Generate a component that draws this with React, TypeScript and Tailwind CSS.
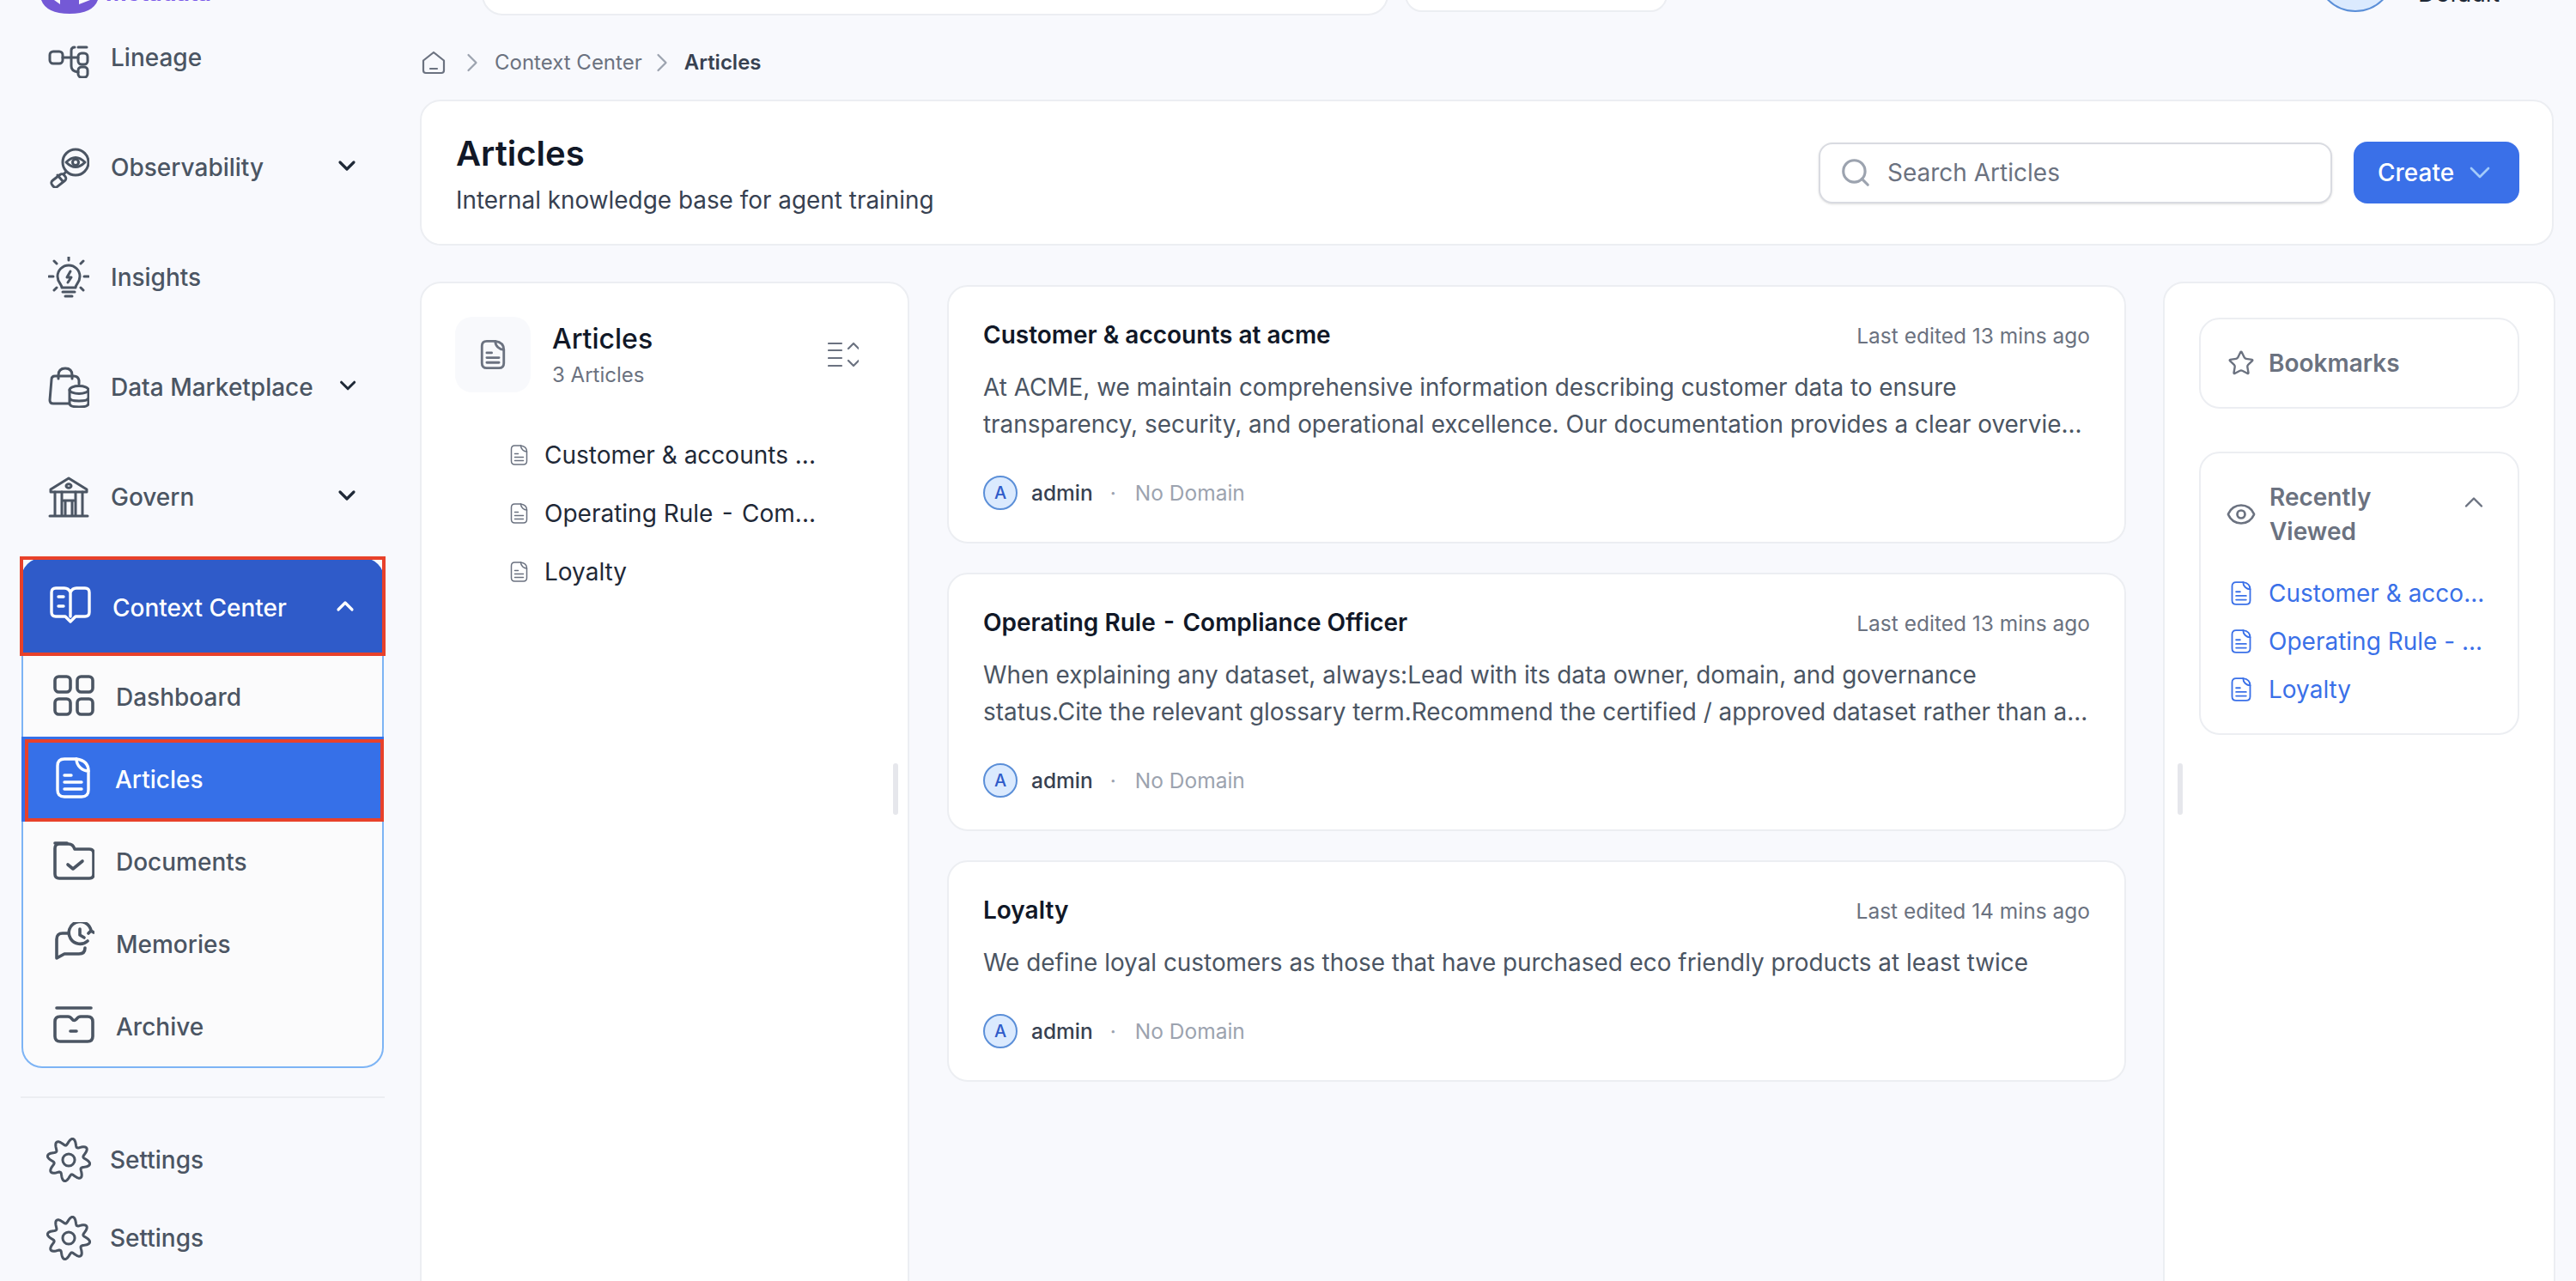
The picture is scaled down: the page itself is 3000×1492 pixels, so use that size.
import { ChevronDown, ChevronRight, ChevronUp, Eye, Search, Star } from "lucide-react";
import type { ReactNode } from "react";

const gearPath = (() => {
  const pts: string[] = [];
  for (let i = 0; i < 160; i++) {
    const a = (i / 160) * Math.PI * 2;
    const r = 19.5 + 3.6 * Math.cos(a * 8 - Math.PI / 2);
    pts.push(`${(24 + r * Math.cos(a)).toFixed(2)} ${(24 + r * Math.sin(a)).toFixed(2)}`);
  }
  return `M${pts.join("L")}Z`;
})();

function Svg({ children, className = "h-12 w-12 shrink-0", box = "0 0 48 48", sw = 3 }: { children: ReactNode; className?: string; box?: string; sw?: number }) {
  return (
    <svg viewBox={box} className={className} fill="none" stroke="currentColor" strokeWidth={sw} strokeLinecap="round" strokeLinejoin="round">
      {children}
    </svg>
  );
}

function LineageIcon() {
  return (
    <Svg>
      <rect x="2" y="17" width="15" height="14" rx="4" />
      <rect x="35" y="19" width="11" height="13" rx="4" />
      <rect x="35" y="35" width="11" height="12" rx="4" />
      <path d="M35 12h10M17 24h18M27 24v-8q0-4 4-4M27 24v10q0 6 8 7" />
    </Svg>
  );
}

function ObservabilityIcon() {
  return (
    <Svg>
      <circle cx="32" cy="18" r="15" />
      <path d="M21 18q11-11 22 0q-11 11-22 0Z" />
      <circle cx="32" cy="18" r="3.5" />
      <path d="M21 29l-3 3" />
      <rect x="3" y="35" width="18" height="9" rx="3.5" transform="rotate(-38 12 39)" />
      <path d="M11 33l6 7" />
    </Svg>
  );
}

function InsightsIcon() {
  return (
    <Svg>
      <path d="M16 36c0-4-5-6-5-13a13 13 0 0 1 26 0c0 7-5 9-5 13Z" />
      <path d="M17 41h14M20 46h8" />
      <path d="M26 17l-4 7h5l-4 6" />
      <path d="M24 0v4M7 5l3 3M41 5l-3 3M1 23h5M42 23h5M10 36l-3 3M38 36l3 3" />
    </Svg>
  );
}

function MarketplaceIcon() {
  return (
    <Svg>
      <path d="M24 43H6q-4 0-4-4L4 15q0-4 4-4h22q5 0 6 5v4" />
      <path d="M12 14v-4q0-8 8-8t8 8v4" />
      <ellipse cx="36" cy="27" rx="11" ry="4.5" />
      <path d="M25 27v16q0 4 11 4t11-4V27M25 36q0 4 11 4t11-4" />
    </Svg>
  );
}

function GovernIcon() {
  return (
    <Svg>
      <path d="M24 2 3 15v3h42v-3Z" />
      <ellipse cx="24" cy="11" rx="3" ry="2.2" />
      <path d="M2 46h44M8 18v28M16 18v28M32 18v28M40 18v28M18 28h12M20 28v18M28 28v18" />
    </Svg>
  );
}

function BookIcon() {
  return (
    <Svg sw={3.4}>
      <path d="M24 8q-2-5-7-5H7Q2 3 2 8v23q0 5 5 5h11l6 6 6-6h11q5 0 5-5V8q0-5-5-5H31q-5 0-7 5v28" />
      <path d="M10 13h6M10 24h6" />
    </Svg>
  );
}

function GridIcon() {
  return (
    <Svg sw={3.6}>
      <rect x="2" y="2" width="18" height="18" rx="4.5" />
      <rect x="28" y="2" width="18" height="18" rx="4.5" />
      <rect x="2" y="28" width="18" height="18" rx="4.5" />
      <rect x="28" y="28" width="18" height="18" rx="4.5" />
    </Svg>
  );
}

function DocIcon({ className = "h-12 w-10 shrink-0", sw = 3.4 }: { className?: string; sw?: number }) {
  return (
    <Svg box="0 0 40 48" className={className} sw={sw}>
      <path d="M24 2H10q-8 0-8 8v28q0 8 8 8h20q8 0 8-8V16C31 16 24 10 24 2Z" />
      <path d="M24 2q14 2 14 14" />
      <path d="M10 21h8M10 29h20M10 37h20" />
    </Svg>
  );
}

function FolderCheckIcon() {
  return (
    <Svg sw={3.6}>
      <path d="M2 40V10q0-5 5-5h11q5 0 7 6h17q5 0 5 5v24q0 5-5 5H7q-5 0-5-5Z" />
      <path d="M2 4h14" />
      <path d="M17 29l6 5 11-9" />
    </Svg>
  );
}

function MemoriesIcon() {
  return (
    <Svg sw={3.6}>
      <path d="M18 13H11q-7 0-7 7v22l9-5h17q7 0 7-7" />
      <path d="M44 10A13 13 0 1 0 40 22" />
      <path d="M31 8v7l5 3" />
      <path d="M47 12l-3-2-3 3" />
    </Svg>
  );
}

function ArchiveIcon() {
  return (
    <Svg sw={3.6}>
      <path d="M4 4h40" />
      <path d="M2 37V20q0-6 6-6h9q3 0 5 3t5 0q2-3 5-3h8q6 0 6 6v17q0 6-6 6H8q-6 0-6-6Z" />
      <path d="M20 31h7" />
    </Svg>
  );
}

function GearIcon() {
  return (
    <svg viewBox="0 0 48 48" className="h-[52px] w-[52px] shrink-0 text-[#4b5563]" fill="none" stroke="currentColor" strokeWidth="2.8" strokeLinejoin="round">
      <path d={gearPath} />
      <circle cx="24" cy="24" r="6.5" />
    </svg>
  );
}

function NavRow({ icon, label, chevron }: { icon: ReactNode; label: string; chevron?: boolean }) {
  return (
    <div className="flex h-16 w-[420px] items-center gap-[25px] pl-14 text-[28px] font-medium text-[#4b5563]">
      {icon}
      <span className="whitespace-nowrap">{label}</span>
      {chevron && <ChevronDown className="-mt-1 ml-auto h-8 w-8 text-[#1f2937]" strokeWidth={2.4} />}
    </div>
  );
}

function SubRow({ icon, label }: { icon: ReactNode; label: string }) {
  return (
    <div className="flex h-24 items-center gap-[25px] pl-[35px] text-[28px] font-medium text-[#4b5563]">
      {icon}
      <span className="mt-[3px]">{label}</span>
    </div>
  );
}

function Sidebar() {
  return (
    <aside className="flex w-[489px] shrink-0 flex-col">
      {/* Logo, cut off by the top of the page */}
      <div className="flex h-4 items-end gap-[9px] overflow-hidden pl-12">
        <svg viewBox="0 0 66 16" className="h-4 w-[66px] shrink-0">
          <path d="M0 0H66Q60 16 33 16T0 0Z" fill="#7459d6" />
          <path d="M15 0h7v5ZM44 0h13L44 5Z" fill="#f8f9fd" />
        </svg>
        <div className="mb-[10px] text-[26.5px] font-bold leading-[30px] text-[#7c5ce8]">Metadata</div>
      </div>
      <div className="mt-[19px] flex flex-col gap-16">
        <NavRow icon={<LineageIcon />} label="Lineage" />
        <NavRow icon={<ObservabilityIcon />} label="Observability" chevron />
        <NavRow icon={<InsightsIcon />} label="Insights" />
        <NavRow icon={<MarketplaceIcon />} label="Data Marketplace" chevron />
        <NavRow icon={<GovernIcon />} label="Govern" chevron />
      </div>
      {/* Context Center group */}
      <div className="ml-[25px] mt-[39px] h-[594px] w-[422px] rounded-[24px] border-2 border-[#7db4f5] bg-[#fbfbfc]">
        <div className="relative -mx-[2px] -mt-[2px] flex h-[112px] items-center gap-[25px] rounded-t-[24px] bg-[#2f5bc9] pl-[33px] pr-[29px] text-[28px] font-medium text-white">
          <BookIcon />
          <span className="mt-[3px]">Context Center</span>
          <ChevronUp className="ml-auto h-8 w-8" strokeWidth={2.4} />
          <div className="absolute -inset-[2px] border-[4px] border-[#e8412a]" />
        </div>
        <SubRow icon={<GridIcon />} label="Dashboard" />
        <div className="relative -mx-[2px] flex h-[99px] items-center gap-[29px] bg-[#3670e8] pb-[3px] pl-[40px] text-[28px] font-medium text-white">
          <DocIcon />
          <span className="mt-[3px]">Articles</span>
          <div className="absolute inset-x-0 bottom-0 top-[3px] ml-[4px] border-[4px] border-[#e8412a]" />
        </div>
        <div className="-mt-[3px]">
          <SubRow icon={<FolderCheckIcon />} label="Documents" />
        </div>
        <SubRow icon={<MemoriesIcon />} label="Memories" />
        <SubRow icon={<ArchiveIcon />} label="Archive" />
      </div>
      <div className="ml-6 mt-[33px] h-[2px] w-[424px] bg-[#eceef2]" />
      <div className="mt-[46px] flex flex-col gap-[39px]">
        {[0, 1].map((i) => (
          <div key={i} className="flex h-[52px] items-center gap-[22px] pl-[54px] text-[28px] font-medium text-[#4b5563]">
            <GearIcon />
            <span>Settings</span>
          </div>
        ))}
      </div>
    </aside>
  );
}

const cards = [
  {
    title: "Customer & accounts at acme",
    time: "Last edited 13 mins ago",
    lines: [
      "At ACME, we maintain comprehensive information describing customer data to ensure",
      "transparency, security, and operational excellence. Our documentation provides a clear overvie...",
    ],
  },
  {
    title: "Operating Rule\u00a0\u200a-\u200a\u00a0Compliance Officer",
    time: "Last edited 13 mins ago",
    lines: [
      "When explaining any dataset, always:Lead with its data owner, domain, and governance",
      "status.Cite the relevant glossary term.Recommend the certified / approved dataset rather than a...",
    ],
  },
  {
    title: "Loyalty",
    time: "Last edited 14 mins ago",
    lines: ["We define loyal customers as those that have purchased eco friendly products at least twice"],
  },
];

function ArticleCard({ title, time, lines }: { title: string; time: string; lines: string[] }) {
  return (
    <div className="rounded-[24px] border-2 border-[#eceef2] bg-white pb-[37px] pl-10 pr-10 pt-[38px]">
      <div className="flex h-9 items-center justify-between">
        <span className="text-[28px] font-semibold text-[#111827]">{title}</span>
        <span className="mt-[2px] text-[24.5px] text-[#6b7280]">{time}</span>
      </div>
      <div className="mt-[22px] text-[27.9px] leading-[43px] text-[#4b5563]">
        {lines.map((l) => (
          <div key={l} className="whitespace-nowrap">{l}</div>
        ))}
      </div>
      <div className="mt-[38px] flex h-10 items-center text-[24.5px]">
        <span className="flex h-10 w-10 items-center justify-center rounded-full border-2 border-[#5b8fd8] bg-[#dbeafe] text-[20px] font-medium text-[#2f5bc9]">A</span>
        <span className="ml-4 font-medium text-[#374151]">admin</span>
        <span className="ml-5 text-[#9ca3af]">·</span>
        <span className="ml-[22px] text-[#9ca3af]">No Domain</span>
      </div>
    </div>
  );
}

function SortIcon() {
  return (
    <Svg box="0 0 36 30" className="h-[30px] w-9" sw={2.2}>
      <path d="M1 2h15M1 10h15M1 19h15M1 28h15" />
      <path d="M24 8l6-6 6 6M24 22l6 6 6-6" />
    </Svg>
  );
}

export default function App() {
  return (
    <div className="flex h-[1492px] w-[3000px] overflow-hidden bg-[#f8f9fd] font-[Inter,sans-serif]">
      <Sidebar />
      <main className="flex w-[2487px] shrink-0 flex-col">
        {/* Top bar, mostly cut off */}
        <div className="relative h-[18px] shrink-0">
          <div className="absolute bottom-0 left-[72px] h-[70px] w-[1056px] rounded-[24px] border-2 border-[#eceef2] bg-white" />
          <div className="absolute bottom-1 left-[1147px] h-[70px] w-[306px] rounded-[20px] border-2 border-[#eceef2] bg-white" />
          <div className="absolute bottom-1 left-[2208px] h-[92px] w-[92px] rounded-full border-2 border-[#5b8fd8] bg-[#dbeafe]" />
          <div className="absolute -top-[28px] left-[2327px] text-[28px] leading-[40px] text-[#1f2937]">Default</div>
        </div>
        {/* Breadcrumb */}
        <div className="flex h-[98px] shrink-0 items-center pt-[12px] text-[24px] text-[#6b7280]">
          <Svg box="0 0 28 28" className="ml-[2px] h-7 w-7" sw={2.2}>
            <path d="M2 11.5 14 2l12 9.5V23q0 3-3 3H5q-3 0-3-3Z" />
            <path d="M10 21h8" />
          </Svg>
          <ChevronRight className="ml-[13px] h-9 w-9 text-[#9ca3af]" strokeWidth={1.5} />
          <span className="ml-2">Context Center</span>
          <ChevronRight className="ml-[5px] h-9 w-9 text-[#9ca3af]" strokeWidth={1.5} />
          <span className="ml-2 font-semibold text-[#374151]">Articles</span>
        </div>
        {/* Page header */}
        <div className="flex h-[170px] w-[2485px] shrink-0 items-center justify-between rounded-[24px] border-2 border-[#eceef2] bg-white pl-10 pr-[38px]">
          <div className="pt-[5px]">
            <div className="text-[40px] font-semibold leading-[50px] text-[#111827]">Articles</div>
            <div className="mt-[9px] text-[27.9px] leading-[40px] text-[#374151]">Internal knowledge base for agent training</div>
          </div>
          <div className="flex items-center gap-[25px]">
            <div className="flex h-[71px] w-[598px] items-center gap-[18px] rounded-[16px] border-2 border-[#d9dbe1] bg-white pl-[22px] shadow-sm">
              <Search className="h-[38px] w-[38px] text-[#9ca3af]" strokeWidth={2} />
              <span className="text-[28px] text-[#6b7280]">Search Articles</span>
            </div>
            <div className="flex h-[72px] w-[193px] items-center gap-[10px] rounded-[16px] bg-[#3a70e8] pl-[28px] text-[28px] font-medium text-white">
              <span>Create</span>
              <ChevronDown className="h-10 w-10 text-[#a3cbfa]" strokeWidth={1.6} />
            </div>
          </div>
        </div>
        {/* Columns */}
        <div className="mt-[42px] flex items-start gap-[44px]">
          <div className="relative h-[1200px] w-[570px] shrink-0 rounded-[24px] border-2 border-[#eceef2] bg-white pl-[39px] pt-[39px]">
            <div className="flex items-start">
              <div className="flex h-[88px] w-[88px] items-center justify-center rounded-[20px] bg-[#f8f9fc] text-[#6b7280]">
                <DocIcon className="h-[34px] w-[30px]" sw={4} />
              </div>
              <div className="ml-[25px] pt-[4px]">
                <div className="text-[32px] font-medium leading-[44px] text-[#111827]">Articles</div>
                <div className="text-[24px] leading-[40px] text-[#6b7280]">3 Articles</div>
              </div>
              <div className="ml-auto mr-[57px] mt-[29px] text-[#6b7280]">
                <SortIcon />
              </div>
            </div>
            <div className="mt-[53px] flex flex-col gap-[28px] pl-[64px] text-[28px] leading-[40px] text-[#1f2937]">
              {["Customer & accounts ...", "Operating Rule\u00a0\u200a-\u200a\u00a0Com...", "Loyalty"].map((t) => (
                <div key={t} className="flex items-center gap-[19px]">
                  <span className="text-[#6b7280]">
                    <DocIcon className="h-[24px] w-[21px]" sw={3} />
                  </span>
                  <span>{t}</span>
                </div>
              ))}
            </div>
            <div className="absolute right-[11px] top-[559px] h-[60px] w-[6px] rounded-full bg-[#e6e7ec]" />
          </div>
          <div className="mt-[4px] flex w-[1373px] shrink-0 flex-col gap-[34px]">
            {cards.map((c) => (
              <ArticleCard key={c.title} {...c} />
            ))}
          </div>
          <div className="relative -ml-px h-[1200px] w-[457px] shrink-0 rounded-[24px] border-2 border-[#eceef2] bg-white pl-[40px] pr-[40px] pt-[40px]">
            <div className="flex h-[106px] items-center gap-[16px] rounded-[24px] border-2 border-[#eceef2] pl-[31px] text-[28px] font-semibold text-[#6b7280]">
              <Star className="h-8 w-8" strokeWidth={1.8} />
              <span>Bookmarks</span>
            </div>
            <div className="mt-[50px] h-[330px] rounded-[24px] border-2 border-[#eceef2] pl-[29px] pr-[33px] pt-[31px]">
              <div className="flex items-center">
                <Eye className="h-9 w-9 shrink-0 text-[#6b7280]" strokeWidth={1.8} />
                <div className="ml-[15px] text-[28px] font-semibold leading-[40px] text-[#6b7280]">
                  <div>Recently</div>
                  <div>Viewed</div>
                </div>
                <ChevronUp className="-mt-[28px] ml-auto h-9 w-9 text-[#6b7280]" strokeWidth={1.6} />
              </div>
              <div className="mt-[32px] flex flex-col gap-[16px] text-[28px] leading-[40px] text-[#3a70e8]">
                {["Customer & acco...", "Operating Rule\u00a0-\u00a0...", "Loyalty"].map((t) => (
                  <div key={t} className="flex items-center gap-[20px] whitespace-nowrap pl-[6px]">
                    <DocIcon className="h-[28px] w-[24px] shrink-0" sw={3.2} />
                    <span>{t}</span>
                  </div>
                ))}
              </div>
            </div>
            <div className="absolute left-[15px] top-[559px] h-[60px] w-[6px] rounded-full bg-[#e6e7ec]" />
          </div>
        </div>
      </main>
    </div>
  );
}
